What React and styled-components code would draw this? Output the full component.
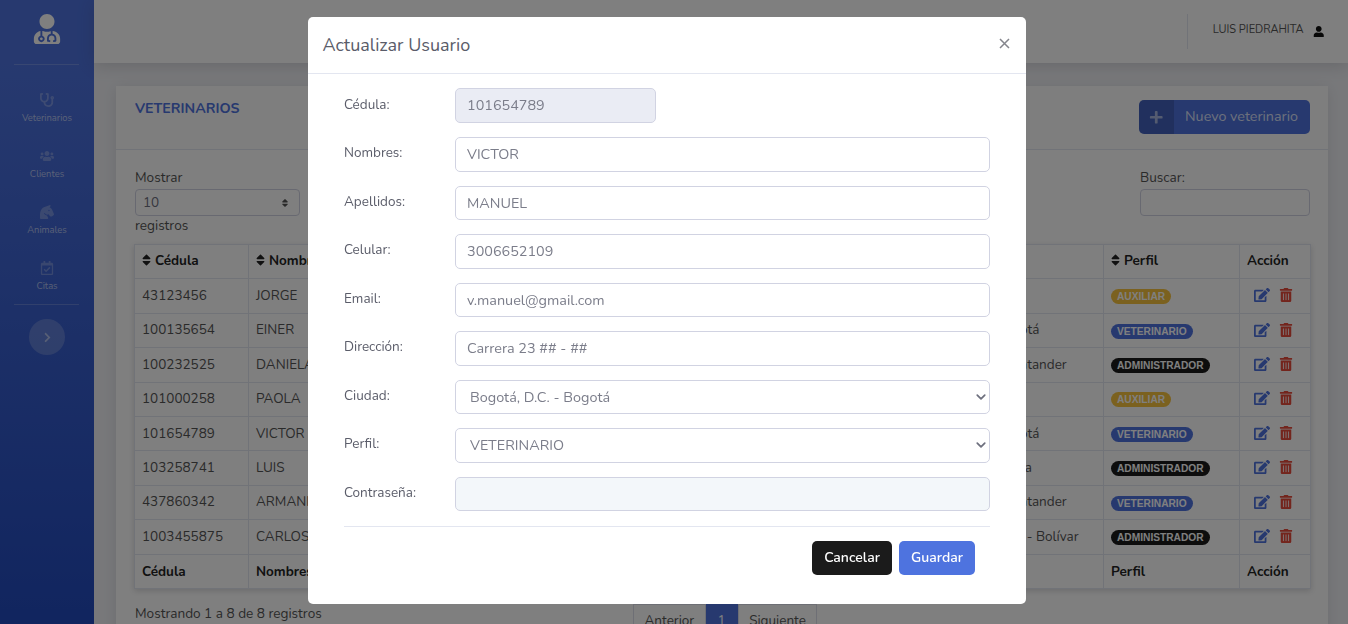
import React from "react";
import styled, { createGlobalStyle } from "styled-components";
import { FaUserMd, FaStethoscope, FaUsers, FaHorseHead, FaRegCalendarCheck, FaChevronRight, FaUser, FaPlus, FaSort, FaEdit, FaTrashAlt } from "react-icons/fa";

const FONT = `"Nunito", "Noto Sans", "Open Sans", sans-serif`;

const Global = createGlobalStyle`
  html, body { margin: 0; padding: 0; height: 100%; overflow: hidden; }
  body { font-family: ${FONT}; font-size: 14px; color: #666; background: #f0f1f5; }
  #root { height: 624px; overflow: hidden; }
  * { box-sizing: border-box; }
`;

const Page = styled.div`display: flex; height: 624px; overflow: hidden;`;
const Sidebar = styled.aside`
  width: 94px; flex: none; display: flex; flex-direction: column; align-items: center;
  background: linear-gradient(180deg, #4e73df 10%, #224abe 100%); color: rgba(255,255,255,.6);
`;
const Logo = styled.div`height: 64px; width: 100%; display: flex; justify-content: center; padding-top: 14px; color: #fff; font-size: 30px; line-height: 1;`;
const SideRule = styled.hr`width: 65px; margin: 0 0 0 -1px; border: 0; border-top: 1px solid rgba(255,255,255,.2);`;
const Nav = styled.nav`width: 100%; padding-top: 15px; height: 239px;`;
const NavItem = styled.div`
  height: 56px; display: flex; flex-direction: column; align-items: center; justify-content: center; gap: 5px;
  font-size: 9.4px; line-height: 12px; svg { font-size: 14px; color: rgba(255,255,255,.28); }
`;
const Toggle = styled.div`
  margin-top: 14px; width: 36px; height: 36px; border-radius: 50%; background: rgba(255,255,255,.2);
  display: flex; align-items: center; justify-content: center; font-size: 11px; color: rgba(255,255,255,.5);
`;
const Main = styled.main`flex: 1; min-width: 0; display: flex; flex-direction: column;`;
const Topbar = styled.header`
  height: 63px; flex: none; background: #fff; box-shadow: 0 2px 16px rgba(58,59,69,.2);
  display: flex; align-items: center; justify-content: flex-end; padding-right: 24px; position: relative;
`;
const TopRule = styled.div`width: 1px; height: 35px; background: #e3e6f0; margin-right: 25px;`;
const UserName = styled.span`font-size: 11px; color: #555; margin-top: -4px;`;
const UserIcon = styled.span`margin-left: 9px; color: #111; font-size: 11.5px; display: flex;`;
const Content = styled.div`padding: 23px 20px 0 22px;`;
const Card = styled.section`
  background: #fff; border-radius: 5px; box-shadow: 0 2px 14px rgba(58,59,69,.12);
`;
const CardHead = styled.div`
  height: 64px; border-bottom: 1px solid #e3e6f0; background: #fcfcfd; padding: 14px 18px 0 19px;
  display: flex; justify-content: space-between; align-items: flex-start;
`;
const CardTitle = styled.h6`margin: 1px 0 0; font-size: 14.2px; line-height: 16px; font-weight: 700; color: #4e73df;`;
const NewBtn = styled.button`
  width: 171px; height: 34px; border: 0; padding: 0; border-radius: 5px; background: #4e73df; color: rgba(255,255,255,.8);
  display: flex; overflow: hidden; font: 14.3px ${FONT}; align-items: stretch;
`;
const NewIcon = styled.span`width: 35px; background: rgba(0,0,0,.15); display: flex; align-items: center; justify-content: center; font-size: 14.5px; color: rgba(255,255,255,.55);`;
const NewLabel = styled.span`flex: 1; display: flex; align-items: center; justify-content: center; padding: 0 1px 2px 0;`;
const CardBody = styled.div`padding: 19px 18px 0 18px;`;
const Controls = styled.div`display: flex; justify-content: space-between; height: 76px; line-height: 16px; margin-bottom: -1px;`;
const LenBlock = styled.div`width: 166px; padding-left: 1px;`;
const SearchBlock = styled.div`width: 170px;`;
const SmallLabel = styled.div`font-size: 13.6px; color: #555; height: 20px; padding-top: ${p => p.$top || 1}px;`;
const SmallSelect = styled.div`
  height: 27px; border: 1px solid #d1d3e2; border-radius: 4px; background: #fff; padding: 0 9px 0 7px;
  display: flex; align-items: center; justify-content: space-between; color: #6e707e; font-size: 13.5px; line-height: 24px;
  svg { font-size: 10px; color: #555; }
`;
const SearchBox = styled.div`height: 27px; border: 1px solid #d1d3e2; border-radius: 4px; background: #fff;`;
const Table = styled.table`
  width: 1176px; table-layout: fixed; border-collapse: collapse; font-size: 13.5px; color: #555;
  box-shadow: 0 2px 6px rgba(58,59,69,.2);
  th, td { border: 1px solid #e3e6f0; height: 34.4px; padding: 0 7px 1px; text-align: left; white-space: nowrap; overflow: hidden; }
  th { color: #222; font-weight: 700; }
  thead th { padding-bottom: 3px; }
  tfoot th { padding-bottom: 0; }
`;
const SortI = styled(FaSort)`width: 9px; height: 14px; margin-right: 4px; vertical-align: -2px;`;
const Badge = styled.span`
  display: inline-block; padding: 0 6px; height: 15px; border-radius: 8px;
  font: 700 10.2px/15px "Liberation Sans", Arial, sans-serif; color: #fff; vertical-align: middle;
  background: ${p => p.$c};
`;
const Actions = styled.td`
  padding: 0 0 4px 14px !important;
  svg { vertical-align: middle; }
`;
const EditI = styled(FaEdit)`color: #4e73df; font-size: 16px; margin-right: 9px;`;
const DelI = styled(FaTrashAlt)`color: #e74a3b; font-size: 14px;`;
const Footer = styled.div`display: grid; grid-template-columns: 498px auto 1fr; margin-top: 15px; font-size: 13.6px; color: #555; padding-left: 1px;`;
const Pager = styled.div`display: flex; height: 32px;`;
const PageBtn = styled.div`
  padding: 7px 10.5px; border: 1px solid #dddfeb; font-size: 13.5px; line-height: 18px; color: #555;
  background: ${p => (p.$on ? "#4e73df" : "#fff")}; ${p => p.$on && "color:#fff; border-color:#4e73df; width: 32px; text-align: center;"}
`;

const Backdrop = styled.div`position: fixed; inset: 0; background: rgba(0,0,0,.5);`;
const Modal = styled.div`
  position: fixed; left: 308px; top: 17px; width: 718px; height: 587px; background: #fff; border-radius: 5px;
  display: flex; flex-direction: column;
`;
const ModalHead = styled.div`
  height: 57px; flex: none; border-bottom: 1px solid #e3e6f0; padding: 0 16px 0 14.5px; display: flex; align-items: center; justify-content: space-between;
`;
const ModalTitle = styled.h5`margin: 0; font-size: 18px; font-weight: 400; color: #5a5c69;`;
const Close = styled.svg`width: 11px; height: 11px; stroke: #84858c; stroke-width: 1.5; fill: none; margin-bottom: 3px;`;
const ModalBody = styled.div`padding: 14.5px 36px 0; display: flex; flex-direction: column;`;
const Row = styled.div`
  display: grid; grid-template-columns: 111px 535px; height: 48.5px; align-items: start;
`;
const Label = styled.label`font-size: 13.5px; color: #5a5c69; line-height: 16px; padding-top: 8.2px;`;
const fieldCss = `
  width: 100%; height: 34.5px; border: 1px solid #d1d3e2; border-radius: 5px; background: #fff; color: #7b7d8a;
  font: 14.4px ${FONT}; padding: 0 11px; outline: none; display: block;
`;
const Input = styled.input`
  ${fieldCss} background: ${p => p.$bg || "#fff"};
  ${p => p.$short && "width: 201px; height: 35px; margin-top: -.5px; padding-bottom: 1px;"}
`;
const Select = styled.select`
  ${fieldCss} appearance: none; padding-left: 14px;
  background: #fff url("data:image/svg+xml,%3csvg xmlns='http://www.w3.org/2000/svg' viewBox='0 0 16 16'%3e%3cpath fill='none' stroke='%236e707e' stroke-linecap='round' stroke-linejoin='round' stroke-width='2.8' d='M2 5l6 6 6-6'/%3e%3c/svg%3e") no-repeat right 3px center / 10px 10px;
`;
const ModalRule = styled.hr`margin: 1px 0 0; border: 0; border-top: 1px solid #e3e6f0;`;
const BtnRow = styled.div`display: flex; justify-content: flex-end; gap: 7px; padding: 14px 15px 0 0;`;
const Btn = styled.button`
  height: 34px; border: 0; border-radius: 5px; padding: 0 0 2px; width: ${p => p.$w}px; color: #fff; font: 600 14px ${FONT};
  background: ${p => p.$bg};
`;

const rows = [
  ["43123456", "JORGE", "RAMÍREZ", "3104567821", "jorge@gmail.com", "Cali", "AUXILIAR"],
  ["100135654", "EINER", "PÉREZ", "3002547896", "einer@gmail.com", "Bogotá, D.C. - Bogotá", "VETERINARIO"],
  ["100232525", "DANIELA", "GÓMEZ", "3125478963", "daniela@gmail.com", "Bucaramanga - Santander", "ADMINISTRADOR"],
  ["101000258", "PAOLA", "ROJAS", "3156987412", "paola@gmail.com", "Neiva", "AUXILIAR"],
  ["101654789", "VICTOR", "MANUEL", "3006652109", "v.manuel@gmail.com", "Bogotá, D.C. - Bogotá", "VETERINARIO"],
  ["103258741", "LUIS", "PIEDRAHITA", "3112365478", "luis@gmail.com", "Medellín - Antioquia", "ADMINISTRADOR"],
  ["437860342", "ARMANDO", "SUÁREZ", "3208745196", "armando@gmail.com", "Bucaramanga - Santander", "VETERINARIO"],
  ["1003455875", "CARLOS", "MARTÍNEZ", "3014785236", "carlos@gmail.com", "Santa Rosa del Sur - Bolívar", "ADMINISTRADOR"],
];
const badgeColor = { AUXILIAR: "#f6c23e", VETERINARIO: "#4e73df", ADMINISTRADOR: "#1b1b1b" };
const cols = [114, 150, 150, 120, 232, 203, 136, 71];
const heads = ["Cédula", "Nombres", "Apellidos", "Celular", "Email", "Ciudad", "Perfil"];

const fields = [
  ["Nombres:", "VICTOR"],
  ["Apellidos:", "MANUEL"],
  ["Celular:", "3006652109"],
  ["Email:", "v.manuel@gmail.com"],
  ["Dirección:", "Carrera 23 ## - ##"],
];

export default function App() {
  return (
    <>
      <Global />
      <Page>
        <Sidebar>
          <Logo><FaUserMd /></Logo>
          <SideRule />
          <Nav>
            <NavItem><FaStethoscope /><span>Veterinarios</span></NavItem>
            <NavItem><FaUsers /><span>Clientes</span></NavItem>
            <NavItem><FaHorseHead /><span>Animales</span></NavItem>
            <NavItem><FaRegCalendarCheck /><span>Citas</span></NavItem>
          </Nav>
          <SideRule />
          <Toggle><FaChevronRight /></Toggle>
        </Sidebar>
        <Main>
          <Topbar>
            <TopRule />
            <UserName>LUIS PIEDRAHITA</UserName>
            <UserIcon><FaUser /></UserIcon>
          </Topbar>
          <Content>
            <Card>
              <CardHead>
                <CardTitle>VETERINARIOS</CardTitle>
                <NewBtn><NewIcon><FaPlus /></NewIcon><NewLabel>Nuevo veterinario</NewLabel></NewBtn>
              </CardHead>
              <CardBody>
                <Controls>
                  <LenBlock>
                    <SmallLabel>Mostrar</SmallLabel>
                    <SmallSelect>10<FaSort /></SmallSelect>
                    <SmallLabel $top={2}>registros</SmallLabel>
                  </LenBlock>
                  <SearchBlock>
                    <SmallLabel>Buscar:</SmallLabel>
                    <SearchBox />
                  </SearchBlock>
                </Controls>
                <Table>
                  <colgroup>{cols.map((w, i) => <col key={i} style={{ width: w }} />)}</colgroup>
                  <thead>
                    <tr>
                      {heads.map(h => <th key={h}><SortI />{h}</th>)}
                      <th>Acción</th>
                    </tr>
                  </thead>
                  <tbody>
                    {rows.map(r => (
                      <tr key={r[0]}>
                        {r.slice(0, 6).map((c, i) => <td key={i}>{c}</td>)}
                        <td><Badge $c={badgeColor[r[6]]}>{r[6]}</Badge></td>
                        <Actions><EditI /><DelI /></Actions>
                      </tr>
                    ))}
                  </tbody>
                  <tfoot>
                    <tr>
                      {heads.map(h => <th key={h}>{h}</th>)}
                      <th>Acción</th>
                    </tr>
                  </tfoot>
                </Table>
                <Footer>
                  <div>Mostrando 1 a 8 de 8 registros</div>
                  <Pager>
                    <PageBtn>Anterior</PageBtn>
                    <PageBtn $on>1</PageBtn>
                    <PageBtn>Siguiente</PageBtn>
                  </Pager>
                </Footer>
              </CardBody>
            </Card>
          </Content>
        </Main>
      </Page>
      <Backdrop />
      <Modal>
        <ModalHead>
          <ModalTitle>Actualizar Usuario</ModalTitle>
          <Close viewBox="0 0 11 11"><path d="M1 1l9 9M10 1l-9 9" /></Close>
        </ModalHead>
        <ModalBody>
          <Row>
            <Label>Cédula:</Label>
            <Input $short $bg="#eaecf4" readOnly value="101654789" />
          </Row>
          {fields.map(([l, v]) => (
            <Row key={l}>
              <Label>{l}</Label>
              <Input readOnly value={v} />
            </Row>
          ))}
          <Row>
            <Label>Ciudad:</Label>
            <Select defaultValue="b"><option value="b">Bogotá, D.C. - Bogotá</option></Select>
          </Row>
          <Row>
            <Label>Perfil:</Label>
            <Select defaultValue="v"><option value="v">VETERINARIO</option></Select>
          </Row>
          <Row>
            <Label>Contraseña:</Label>
            <Input $bg="#f3f7fa" readOnly value="" />
          </Row>
          <ModalRule />
          <BtnRow>
            <Btn $w={80} $bg="#1b1b1b">Cancelar</Btn>
            <Btn $w={76} $bg="#4e73df">Guardar</Btn>
          </BtnRow>
        </ModalBody>
      </Modal>
    </>
  );
}
